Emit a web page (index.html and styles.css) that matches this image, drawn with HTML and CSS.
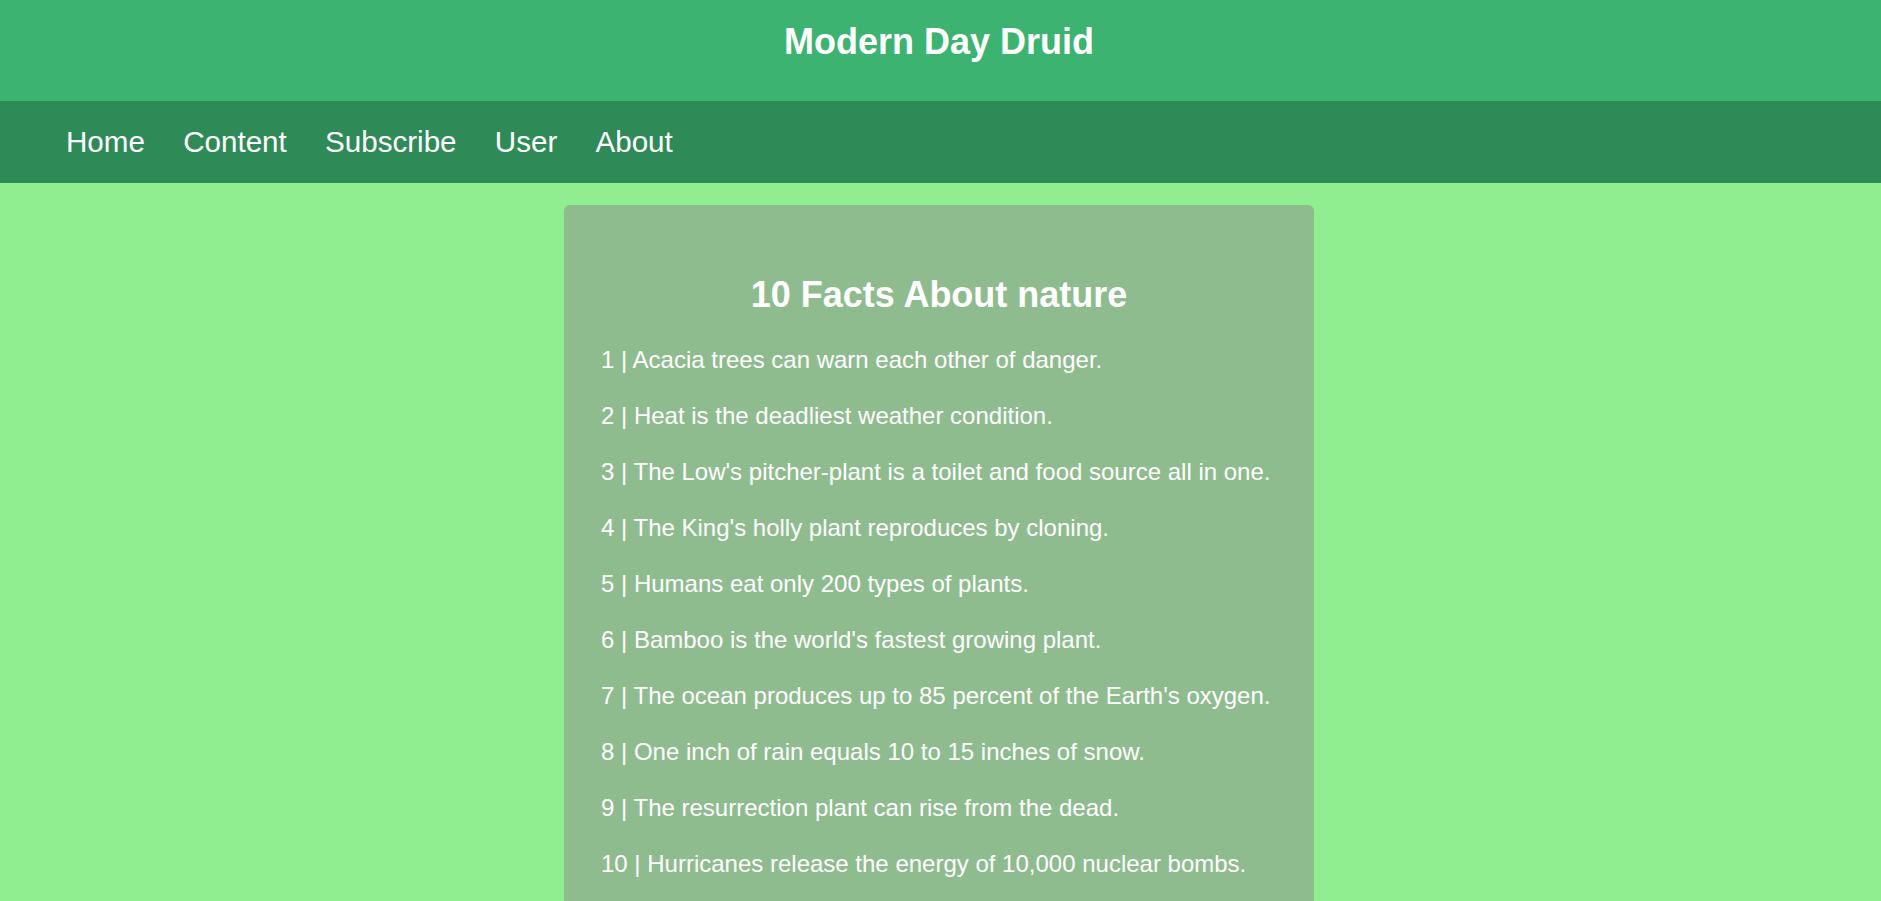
FILE: index.html
```html
<!DOCTYPE html>
<html lang="en">
<head>
<meta charset="utf-8">
<title>Modern Day Druid</title>
<link rel="stylesheet" href="styles.css">
</head>
<body>
<header class="site-header">
  <h1 class="site-title">Modern Day Druid</h1>
</header>
<nav class="site-nav">
  <a class="nav-link" href="#">Home</a>
  <a class="nav-link" href="#">Content</a>
  <a class="nav-link" href="#">Subscribe</a>
  <a class="nav-link" href="#">User</a>
  <a class="nav-link" href="#">About</a>
</nav>
<main class="main">
  <section class="card">
    <h2 class="card-title">10 Facts About nature</h2>
    <p class="fact">1 | Acacia trees can warn each other of danger.</p>
    <p class="fact">2 | Heat is the deadliest weather condition.</p>
    <p class="fact">3 | The Low's pitcher-plant is a toilet and food source all in one.</p>
    <p class="fact">4 | The King's holly plant reproduces by cloning.</p>
    <p class="fact">5 | Humans eat only 200 types of plants.</p>
    <p class="fact">6 | Bamboo is the world's fastest growing plant.</p>
    <p class="fact">7 | The ocean produces up to 85 percent of the Earth's oxygen.</p>
    <p class="fact">8 | One inch of rain equals 10 to 15 inches of snow.</p>
    <p class="fact">9 | The resurrection plant can rise from the dead.</p>
    <p class="fact">10 | Hurricanes release the energy of 10,000 nuclear bombs.</p>
  </section>
</main>
</body>
</html>
```
FILE: styles.css
```css
html, body {
  margin: 0;
  padding: 0;
}
body {
  background: #90ee90;
  font-family: "Liberation Sans", Arial, sans-serif;
  color: #ffffff;
}
.site-header {
  background: #3cb371;
  height: 101px;
  box-sizing: border-box;
  padding-top: 21px;
  padding-right: 3px;
}
.site-title {
  margin: 0;
  font-size: 36px;
  line-height: 41px;
  font-weight: bold;
  text-align: center;
}
.site-nav {
  background: #2e8b57;
  height: 82px;
  display: flex;
  align-items: center;
  gap: 38.2px;
  padding-left: 66px;
}
.nav-link {
  color: #ffffff;
  text-decoration: none;
  font-size: 29.6px;
  line-height: 34px;
}
.main {
  display: flex;
  justify-content: center;
  padding: 22px 3px 0 0;
}
.card {
  width: 750px;
  box-sizing: border-box;
  background: #8fbc8f;
  border-radius: 6px;
  padding: 36px 37px 40px;
}
.card-title {
  margin: 33px 0 29px;
  font-size: 36px;
  line-height: 41px;
  font-weight: bold;
  text-align: center;
}
.fact {
  margin: 0 0 24px;
  font-size: 24px;
  line-height: 32px;
  white-space: nowrap;
}
```
